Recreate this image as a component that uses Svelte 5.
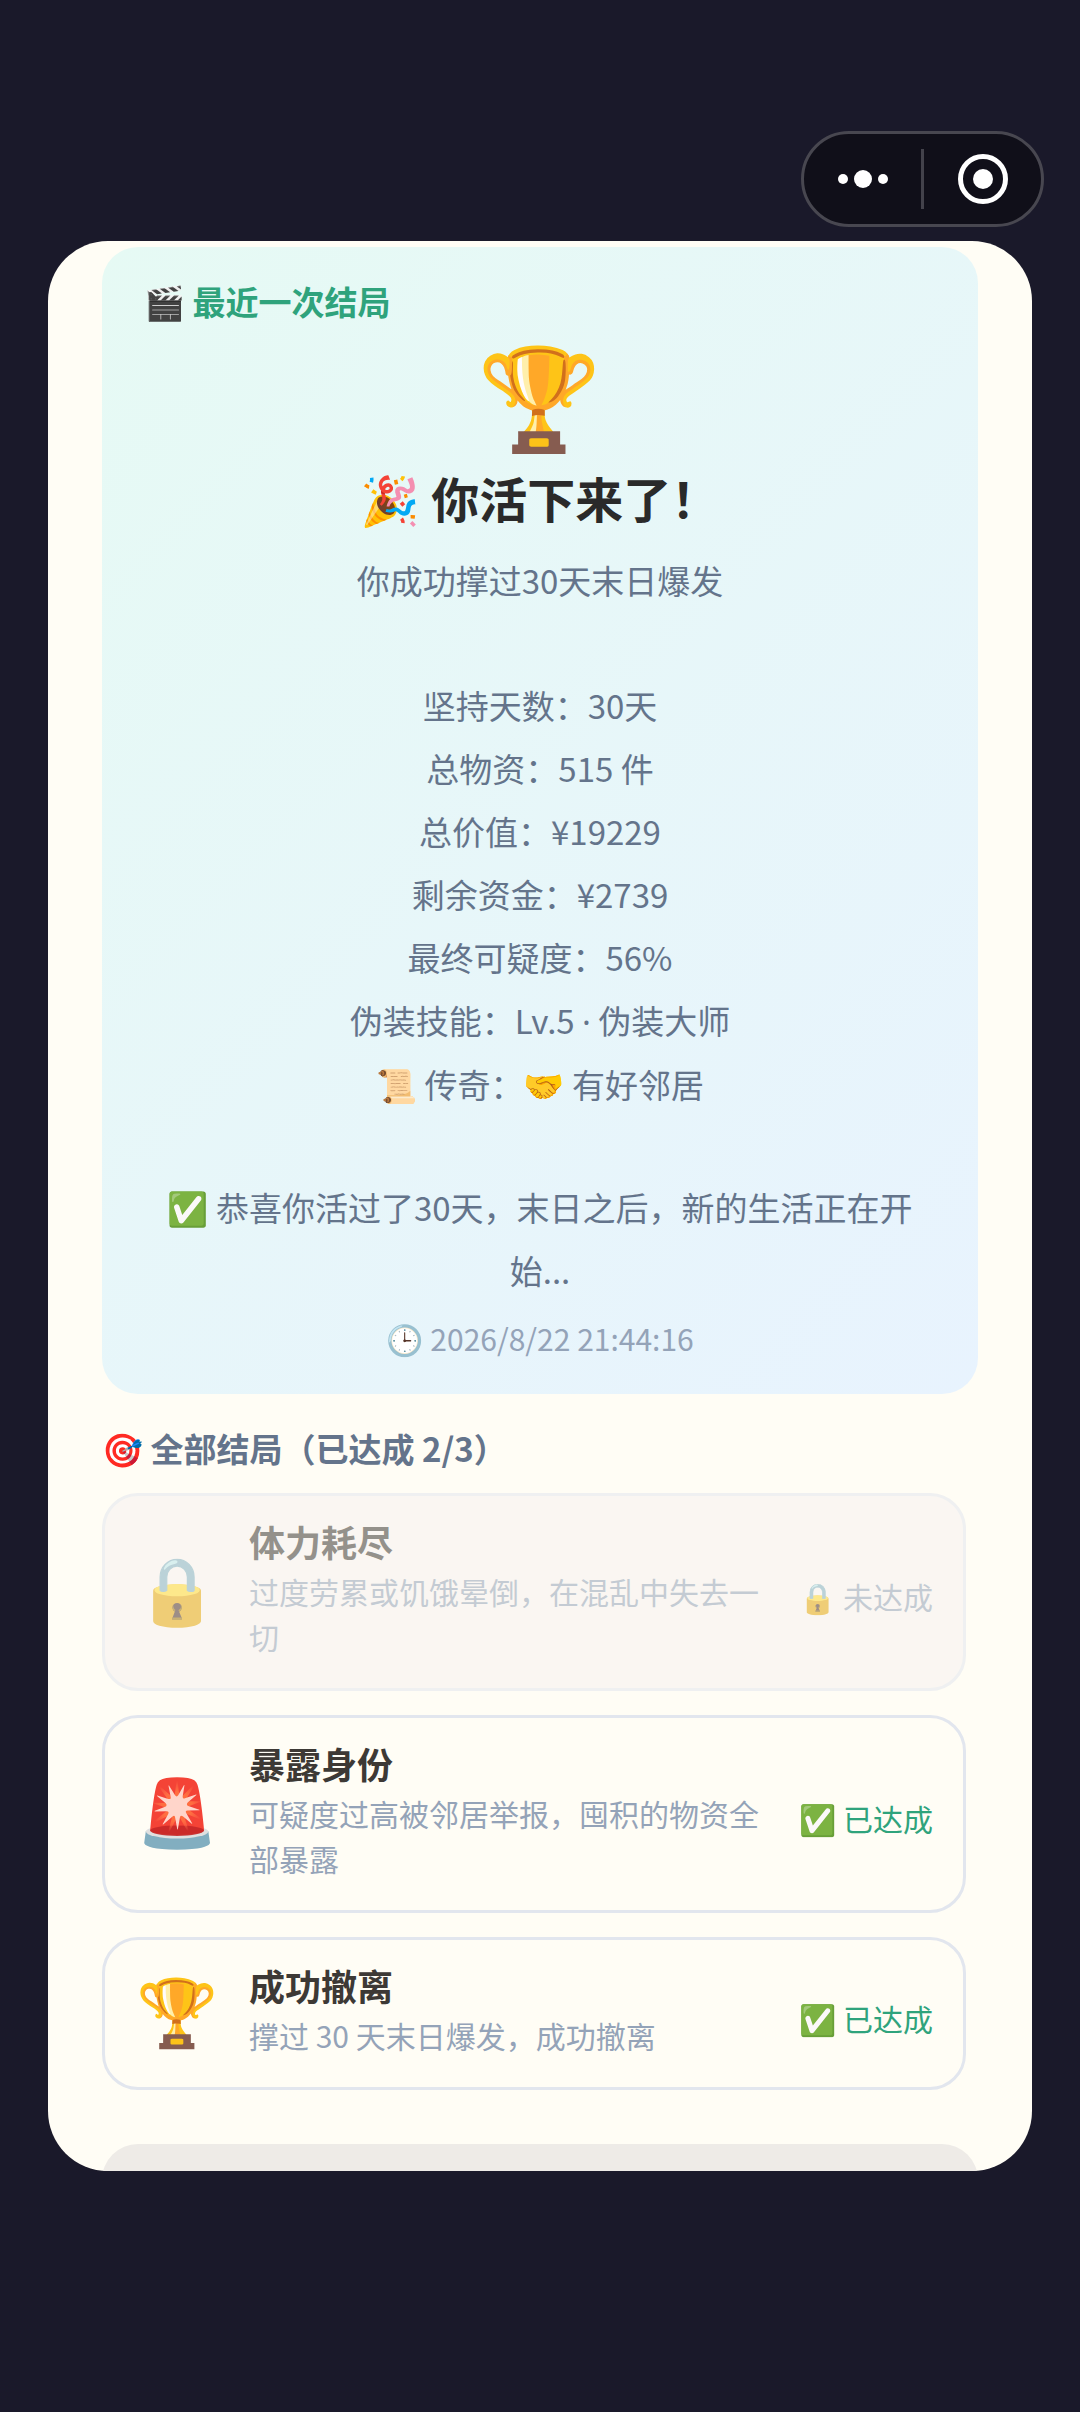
<script lang="ts">
	interface Ending {
		icon: string;
		name: string;
		text: string;
		isReached: boolean;
	}

	const stats = [
		'坚持天数：30天',
		'总物资：515 件',
		'总价值：¥19229',
		'剩余资金：¥2739',
		'最终可疑度：56%',
		'伪装技能：Lv.5 · 伪装大师',
		'📜 传奇：🤝 有好邻居'
	];

	const endings: Ending[] = [
		{ icon: '🔒', name: '体力耗尽', text: '过度劳累或饥饿晕倒，在混乱中失去一切', isReached: false },
		{ icon: '🚨', name: '暴露身份', text: '可疑度过高被邻居举报，囤积的物资全部暴露', isReached: true },
		{ icon: '🏆', name: '成功撤离', text: '撑过 30 天末日爆发，成功撤离', isReached: true }
	];

	const reached = endings.filter((ending) => ending.isReached).length;
</script>

<div class="page">
	<div class="capsule">
		<button type="button" aria-label="更多">
			<svg width="50" height="50" viewBox="0 0 50 50" fill="#fff">
				<circle cx="5" cy="25" r="5" />
				<circle cx="25" cy="25" r="9" />
				<circle cx="45" cy="25" r="5" />
			</svg>
		</button>
		<span class="divider"></span>
		<button type="button" aria-label="关闭">
			<svg width="50" height="50" viewBox="0 0 50 50">
				<circle cx="25" cy="25" r="22.5" fill="none" stroke="#fff" stroke-width="5" />
				<circle cx="25" cy="25" r="10" fill="#fff" />
			</svg>
		</button>
	</div>

	<main class="panel">
		<section class="recent">
			<h2>🎬 最近一次结局</h2>
			<div class="trophy">🏆</div>
			<h1>🎉 你活下来了！</h1>
			<p>你成功撑过30天末日爆发</p>
			<ul class="stats">
				{#each stats as stat}
					{@const [main, extra] = stat.split('·')}
					<!-- the CJK font draws the middle dot full width -->
					<li>{main}{#if extra}<span class="dot">·</span>{extra}{/if}</li>
				{/each}
			</ul>
			<p>✅ 恭喜你活过了30天，末日之后，新的生活正在开始...</p>
			<time>🕒 2026/8/22 21:44:16</time>
		</section>

		<h2 class="all">🎯 全部结局（已达成 {reached}/{endings.length}）</h2>
		<ul class="endings">
			{#each endings as { icon, name, text, isReached }}
				<li class="ending" class:locked={!isReached}>
					<span class="icon">{icon}</span>
					<div class="info">
						<h3>{name}</h3>
						<p>{text}</p>
					</div>
					<span class="status">{isReached ? '✅ 已达成' : '🔒 未达成'}</span>
				</li>
			{/each}
		</ul>
		<button class="back" type="button" aria-label="返回"></button>
	</main>
</div>

<style>
	:global(body) {
		margin: 0;
		background: #1a192a;
	}

	.page {
		position: relative;
		box-sizing: border-box;
		min-height: 100vh;
		padding: 10vh 48px;
		display: flex;
		flex-direction: column;
		font-family: 'Noto Sans CJK SC', 'Noto Color Emoji', sans-serif;
		justify-content: center;
	}

	h1,
	h2,
	h3,
	p,
	ul {
		margin: 0;
		padding: 0;
		list-style: none;
	}

	.capsule {
		position: absolute;
		top: 131px;
		right: 36px;
		box-sizing: border-box;
		width: 243px;
		height: 96px;
		background: #100f19;
		border: 3px solid #484750;
		border-radius: 48px;
		display: flex;
		align-items: center;

		& button {
			flex: 1;
			background: none;
			border: none;
			display: flex;
			justify-content: center;
			padding: 0;
		}
	}

	.divider {
		background: #43424b;
		width: 3px;
		height: 60px;
	}

	.panel {
		box-sizing: border-box;
		height: 80vh;
		overflow: hidden;
		background: #fffdf5;
		border-radius: 60px;
		padding: 6px 54px 0;
	}

	.recent {
		background: linear-gradient(135deg, #e6faf4, #e8f3fe);
		border-radius: 36px;
		color: #64748b;
		display: flex;
		flex-direction: column;
		font-size: 33px;
		line-height: 63px;
		padding: 30px 42px 24px;
		text-align: center;

		& h2 {
			color: #2fa37c;
			text-align: left;
			line-height: 48px;
		}
	}

	h2 {
		font-size: 33px;
		font-weight: 700;
	}

	.trophy {
		font-size: 100px;
		line-height: 132px;
		margin-bottom: 4px;
	}

	h1 {
		color: #2a2a2a;
		font-size: 48px;
		line-height: 72px;
		margin-bottom: 16px;
	}

	.stats {
		margin: 62px 0 60px;
	}

	.dot {
		font-family: 'Noto Sans', sans-serif;
	}

	time {
		color: #94a3b8;
		font-size: 30px;
		margin-top: 5px;
	}

	.all {
		color: #64748b;
		line-height: 48px;
		margin: 30px 0 21px;
	}

	.endings {
		display: flex;
		flex-direction: column;
		gap: 24px;
		margin-right: 12px;
	}

	.ending {
		border: 3px solid #e2e6ee;
		border-radius: 36px;
		display: flex;
		align-items: center;
		padding: 21px 30px 29px 33px;

		&.locked {
			background: #f6f2f0;
			opacity: 0.55;
		}
	}

	.icon {
		flex: none;
		display: flex;
		justify-content: center;
		font-size: 66px;
		line-height: 78px;
		margin-bottom: 6px;
		width: 78px;
	}

	.info {
		flex: 1;
		margin: 0 24px 0 33px;
	}

	h3 {
		color: #3d3935;
		font-size: 36px;
		line-height: 48px;
		margin-bottom: 4px;
	}

	.info p {
		color: #94a3b8;
		font-size: 30px;
		line-height: 45px;
	}

	.status {
		color: #2fa37c;
		font-size: 30px;
		margin-top: 16px;
		white-space: nowrap;
	}

	.locked .status {
		color: #94a3b8;
	}

	.back {
		background: #eeebe7;
		border: none;
		border-radius: 36px;
		display: block;
		height: 96px;
		margin-top: 54px;
		width: 100%;
	}
</style>
